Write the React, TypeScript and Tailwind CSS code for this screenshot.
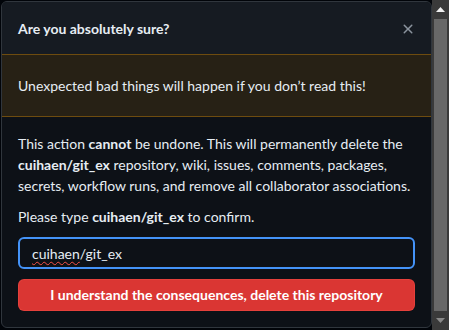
export default function App() {
  const font = { fontFamily: '"Segoe UI", Lato, "Liberation Sans", sans-serif' };
  return (
    <div className="flex h-[330px] w-[449px] overflow-hidden bg-[#010409] text-[#e6edf3]" style={font}>
      {/* Dialog */}
      <div className="flex-1 pl-px pt-px">
        <div className="flex h-[327px] w-[431px] flex-col overflow-hidden rounded-md border border-[#30363d] bg-[#0d1117]">
          <div className="flex h-[52px] items-center justify-between bg-[#161b22] pl-4 pr-[15px] pt-0.5">
            <h1 className="text-sm font-bold">Are you absolutely sure?</h1>
            <svg width="16" height="16" viewBox="0 0 16 16" className="text-[#8b949e]" fill="currentColor">
              <path d="M3.72 3.72a.75.75 0 0 1 1.06 0L8 6.94l3.22-3.22a.749.749 0 0 1 1.275.326.749.749 0 0 1-.215.734L9.06 8l3.22 3.22a.749.749 0 0 1-.326 1.275.749.749 0 0 1-.734-.215L8 9.06l-3.22 3.22a.751.751 0 0 1-1.042-.018.751.751 0 0 1-.018-1.042L6.94 8 3.72 4.78a.75.75 0 0 1 0-1.06Z" />
            </svg>
          </div>
          <div className="border-y border-[#6e4c0f] bg-[#272115] px-4 py-5 text-sm leading-[21px]">
            Unexpected bad things will happen if you don’t read this!
          </div>
          <div className="px-4 pt-4 text-sm leading-[21px]">
            <p className="mb-2.5">
              This action <strong className="font-bold">cannot</strong> be undone. This will permanently delete the{" "}
              <strong className="font-bold">cuihaen/git_ex</strong> repository, wiki, issues, comments, packages,
              secrets, workflow runs, and remove all collaborator associations.
            </p>
            <p className="mb-2.5">
              Please type <strong className="font-bold">cuihaen/git_ex</strong> to confirm.
            </p>
            <div className="flex h-8 items-center rounded-md border-2 border-[#4493f8] px-3">
              <span className="underline decoration-[#f85149] decoration-wavy decoration-1 underline-offset-2">cuihaen</span>
              <span>/git_ex</span>
            </div>
            <button className="mt-2.5 flex h-8 w-full items-center justify-center rounded-md border border-[#f85149]/40 bg-[#da3633] text-sm font-bold text-white">
              I understand the consequences, delete this repository
            </button>
          </div>
        </div>
      </div>
      {/* Scrollbar */}
      <div className="flex w-[17px] flex-col items-center bg-[#3a3a3a]">
        <div className="flex h-[19px] w-full items-center justify-center">
          <svg width="9" height="5" viewBox="0 0 9 5"><path d="M0 5 L4.5 0 L9 5 Z" fill="#f0f0f0" /></svg>
        </div>
        <div className="h-[292px] w-[13px] bg-[#686868]" />
        <div className="flex h-[19px] w-full items-center justify-center">
          <svg width="9" height="5" viewBox="0 0 9 5"><path d="M0 0 L9 0 L4.5 5 Z" fill="#8a8a8a" /></svg>
        </div>
      </div>
    </div>
  );
}
